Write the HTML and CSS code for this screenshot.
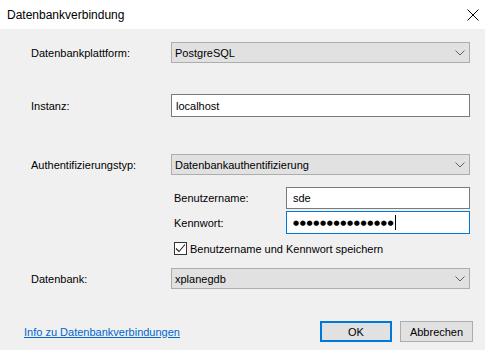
FILE: index.html
```html
<!DOCTYPE html>
<html lang="de">
<head>
    <meta charset="UTF-8">
    <title>Datenbankverbindung</title>
    <link rel="stylesheet" href="styles.css">
</head>
<body>
    <!-- Fenstertitel -->
    <div class="titlebar">
        <span class="title">Datenbankverbindung</span>
        <svg class="close" width="12" height="12" viewBox="0 0 12 12">
            <path d="M0.5 0.5 L11.5 11.5 M11.5 0.5 L0.5 11.5" stroke="#000" stroke-width="1" fill="none"/>
        </svg>
    </div>

    <div class="content">
        <div class="row row-platform">
            <label class="label">Datenbankplattform:</label>
            <div class="combo">
                <span>PostgreSQL</span>
                <svg class="chevron" width="10" height="6" viewBox="0 0 10 6"><path d="M0.5 0.5 L5 5 L9.5 0.5" stroke="#606060" fill="none"/></svg>
            </div>
        </div>

        <div class="row row-instance">
            <label class="label">Instanz:</label>
            <div class="input">localhost</div>
        </div>

        <div class="row row-auth">
            <label class="label">Authentifizierungstyp:</label>
            <div class="combo">
                <span>Datenbankauthentifizierung</span>
                <svg class="chevron" width="10" height="6" viewBox="0 0 10 6"><path d="M0.5 0.5 L5 5 L9.5 0.5" stroke="#606060" fill="none"/></svg>
            </div>
        </div>

        <div class="credentials">
            <div class="subrow">
                <label class="sublabel">Benutzername:</label>
                <div class="input short">sde</div>
            </div>
            <div class="subrow subrow-pw">
                <label class="sublabel">Kennwort:</label>
                <div class="input short focused"><span class="dots">●●●●●●●●●●●●●●●</span><span class="caret"></span></div>
            </div>
            <div class="check-row">
                <span class="checkbox">
                    <svg width="11" height="11" viewBox="0 0 11 11"><path d="M1 5.5 L4 8.5 L10 1.5" stroke="#222" stroke-width="1.1" fill="none"/></svg>
                </span>
                <span>Benutzername und Kennwort speichern</span>
            </div>
        </div>

        <div class="row row-db">
            <label class="label">Datenbank:</label>
            <div class="combo">
                <span>xplanegdb</span>
                <svg class="chevron" width="10" height="6" viewBox="0 0 10 6"><path d="M0.5 0.5 L5 5 L9.5 0.5" stroke="#606060" fill="none"/></svg>
            </div>
        </div>

        <!-- Fußzeile -->
        <div class="footer">
            <a href="#" class="info-link">Info zu Datenbankverbindungen</a>
            <div class="buttons">
                <button class="btn btn-default">OK</button>
                <button class="btn">Abbrechen</button>
            </div>
        </div>
    </div>
</body>
</html>
```

FILE: styles.css
```css
* {
    margin: 0;
    padding: 0;
    box-sizing: border-box;
}

body {
    font-family: 'Liberation Sans', Arial, sans-serif;
    font-size: 11px;
    color: #000;
    background-color: #f0f0f0;
    width: 485px;
    height: 350px;
    overflow: hidden;
}

/* Titelleiste */
.titlebar {
    height: 29px;
    background-color: #fff;
    display: flex;
    justify-content: space-between;
    align-items: center;
    padding: 0 6px 0 7px;
    font-size: 12px;
}

.close {
    margin-top: 1px;
}

.content {
    padding: 13px 15px 0 31px;
}

.row {
    display: flex;
    align-items: center;
}

.label {
    width: 140px;
    flex-shrink: 0;
}

.row-instance {
    margin-top: 31px;
}

.row-auth {
    margin-top: 37px;
}

.row-db {
    margin-top: 13px;
}

/* Kombinationsfeld */
.combo {
    flex: 1;
    height: 21px;
    background-color: #e1e1e1;
    border: 1px solid #adadad;
    display: flex;
    justify-content: space-between;
    align-items: center;
    padding: 0 4px 0 3px;
}

.chevron {
    margin-top: 1px;
}

/* Textfeld */
.input {
    flex: 1;
    height: 23px;
    background-color: #fff;
    border: 1px solid #7a7a7a;
    display: flex;
    align-items: center;
    padding: 0 4px 0 4px;
}

.input.short {
    height: 22px;
    padding-left: 6px;
}

.input.focused {
    height: 23px;
    border-color: #0078d7;
}

.dots {
    font-family: 'DejaVu Sans', sans-serif;
    font-size: 7px;
    letter-spacing: 0.65px;
}

.caret {
    width: 1px;
    height: 15px;
    background-color: #000;
    margin-left: 1px;
}

/* Anmeldedaten */
.credentials {
    padding-left: 143px;
    margin-top: 12px;
}

.subrow {
    display: flex;
    align-items: center;
}

.subrow-pw {
    margin-top: 2px;
}

.sublabel {
    width: 112px;
    flex-shrink: 0;
}

.check-row {
    display: flex;
    align-items: center;
    margin-top: 8px;
    gap: 3px;
}

.checkbox {
    width: 13px;
    height: 13px;
    border: 1px solid #333;
    background-color: #fff;
    display: flex;
    align-items: center;
    justify-content: center;
}

/* Fußzeile */
.footer {
    display: flex;
    justify-content: space-between;
    align-items: center;
    margin-top: 32px;
    margin-left: -7px;
}

.info-link {
    color: #0066cc;
    text-decoration: underline;
}

.buttons {
    display: flex;
    gap: 8px;
    margin-right: -3px;
}

.btn {
    font-family: inherit;
    font-size: 11px;
    color: #000;
    width: 73px;
    height: 21px;
    background-color: #e1e1e1;
    border: 1px solid #adadad;
}

.btn-default {
    width: 72px;
    border: 2px solid #0078d7;
}
```
